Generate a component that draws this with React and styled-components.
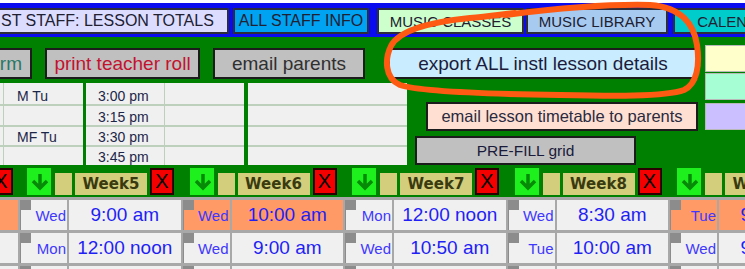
import React from 'react';
import styled, { createGlobalStyle } from 'styled-components';

const GlobalStyle = createGlobalStyle`
  *, *::before, *::after { box-sizing: border-box; }
  body {
    margin: 0;
    background: #008000;
    font-family: 'Liberation Sans', Arial, sans-serif;
  }
`;

// top sheet tabs
const tabs = [
  { label: 'ST STAFF: LESSON TOTALS', w: 231, ml: -2, bg: '#dcdcff', fs: 16, start: true },
  { label: 'ALL STAFF INFO', w: 136, ml: 4, bg: '#00a2f2', fs: 16 },
  { label: 'MUSIC CLASSES', w: 147, ml: 8, bg: '#ccffcc', fs: 15 },
  { label: 'MUSIC LIBRARY', w: 142, ml: 2, bg: '#a6caf0', fs: 15 },
  { label: 'CALENDAR', w: 130, ml: 5, bg: '#00cccc', fs: 15 },
];

const tableRows = [
  { days: 'M Tu', time: '3:00 pm' },
  { days: '', time: '3:15 pm' },
  { days: 'MF Tu', time: '3:30 pm' },
  { days: '', time: '3:45 pm' },
];

const weeks = [
  { n: 5, r1: { day: 'Wed', time: '9:00 am' }, r2: { day: 'Mon', time: '12:00 noon' } },
  { n: 6, r1: { day: 'Wed', time: '10:00 am', hot: true }, r2: { day: 'Wed', time: '9:00 am' } },
  { n: 7, r1: { day: 'Mon', time: '12:00 noon' }, r2: { day: 'Wed', time: '10:50 am' } },
  { n: 8, r1: { day: 'Wed', time: '8:30 am' }, r2: { day: 'Tue', time: '10:00 am' } },
  { n: 9, r1: { day: 'Tue', time: '9:00 am', hot: true }, r2: { day: 'Wed', time: '9:00 am' } },
];

const DownArrow = () => (
  <svg width="24" height="27" viewBox="0 0 24 27">
    <path d="M13 6 V20 M6 13 L13 20 L20 13" stroke="#078a07" strokeWidth="3.5" fill="none" />
  </svg>
);

const App = () => {
  return (
    <Page>
      <GlobalStyle />
      <TabBar>
        {tabs.map((t) => (
          <Tab key={t.label} $w={t.w} $ml={t.ml} $bg={t.bg} $fs={t.fs} $start={t.start}>
            {t.label}
          </Tab>
        ))}
      </TabBar>

      <Controls>
        <LeftCol>
          <ButtonRow>
            <Btn $w={34} $ml={-2} $color="#2b7866" $end>
              rm
            </Btn>
            <Btn $w={155} $ml={13} $color="#c4122f">
              print teacher roll
            </Btn>
            <Btn $w={152} $ml={13}>
              email parents
            </Btn>
            <Btn $w={310} $ml={23} $bg="#c9ecff" $color="#1c1c3c">
              export ALL instl lesson details
            </Btn>
          </ButtonRow>
          <BottomRow>
            <Table>
              <Group $w={83} $cols="3px 1fr">
                {tableRows.map((r, i) => (
                  <React.Fragment key={i}>
                    <Cell />
                    <Cell $pl={13}>{r.days}</Cell>
                  </React.Fragment>
                ))}
              </Group>
              <Group $w={158} $ml={3} $cols="78px 1fr">
                {tableRows.map((r, i) => (
                  <React.Fragment key={i}>
                    <Cell $pl={12}>{r.time}</Cell>
                    <Cell />
                  </React.Fragment>
                ))}
              </Group>
              <Group $w={159} $ml={4} $cols="1fr">
                {tableRows.map((r, i) => (
                  <Cell key={i} />
                ))}
              </Group>
            </Table>
            <SideButtons>
              <Btn $w={272} $h={29} $ml={19} $mt={19} $bg="#ffdfd2" $color="#2a2a40" $fs={16.5}>
                email lesson timetable to parents
              </Btn>
              <Btn $w={221} $h={29} $ml={8} $mt={5} $color="#1a1a3a" $fs={15.5}>
                PRE-FILL grid
              </Btn>
            </SideButtons>
          </BottomRow>
        </LeftCol>
        <RightCol>
          <ColorBox $bg="#ffffcc" />
          <ColorBox $bg="#a6ffd4" $mt={1} />
          <ColorBox $bg="#cbbfff" $mt={3} />
        </RightCol>
      </Controls>

      <WeekBar>
        <XBox $ml={-11}>X</XBox>
        {weeks.map((w, i) => (
          <WeekGroup key={w.n} $ml={i === 0 ? 14 : 15.5}>
            <ArrowBox>
              <DownArrow />
            </ArrowBox>
            <Khaki $w={17} $ml={4} />
            <Khaki $w={72} $ml={3}>
              Week{w.n}
            </Khaki>
            <XBox $ml={3}>X</XBox>
          </WeekGroup>
        ))}
      </WeekBar>

      <Sheet>
        {['r1', 'r2', 'r3'].map((key, ri) => (
          <DataRow key={key}>
            <TimeCell $w={18} $hot={ri === 0} />
            {weeks.map((w) => {
              const c = w[key] || {};
              return (
                <React.Fragment key={w.n}>
                  <DayCell $hot={c.hot}>{c.day}</DayCell>
                  <TimeCell $w={111.5} $hot={c.hot}>
                    {c.time}
                  </TimeCell>
                </React.Fragment>
              );
            })}
          </DataRow>
        ))}
      </Sheet>

      <Annotation width="745" height="269" viewBox="0 0 745 269">
        <path
          d="M505 15 C560 8, 610 4, 650 5 C682 7, 694 25, 697 45 C700 65, 697 84, 684 90 C665 97, 610 96, 560 95 C490 94, 420 92, 400 85 C384 78, 385 58, 391 46 C399 30, 430 22, 470 18 C490 16, 505 14, 515 13"
          stroke="#ff5a12"
          strokeWidth="6"
          fill="none"
          strokeLinecap="round"
        />
      </Annotation>
    </Page>
  );
};

const Page = styled.div`
  position: relative;
  width: 745px;
  height: 269px;
  overflow: hidden;
  background: #008000;
`;

const TabBar = styled.div`
  display: flex;
  height: 37px;
  border-top: 3px solid #fff;
  padding-top: 5px;
  background: #0b0bf0;
`;

const Tab = styled.div`
  flex: none;
  width: ${(p) => p.$w}px;
  margin-left: ${(p) => p.$ml}px;
  height: 26px;
  background: ${(p) => p.$bg};
  border: 2px solid #2c2c3c;
  display: flex;
  align-items: center;
  justify-content: ${(p) => (p.$start ? 'flex-start' : 'center')};
  padding-left: ${(p) => (p.$start ? 1 : 0)}px;
  font-size: ${(p) => p.$fs}px;
  color: #202030;
  white-space: nowrap;
  overflow: hidden;
`;

const Controls = styled.div`
  display: flex;
  height: 129px;
`;

const LeftCol = styled.div`
  width: 705px;
  flex: none;
  display: flex;
  flex-direction: column;
`;

const ButtonRow = styled.div`
  display: flex;
  padding-top: 11px;
`;

const Btn = styled.div`
  flex: none;
  width: ${(p) => p.$w}px;
  height: ${(p) => p.$h || 31}px;
  margin-left: ${(p) => p.$ml || 0}px;
  margin-top: ${(p) => p.$mt || 0}px;
  background: ${(p) => p.$bg || '#c0c0c0'};
  border: 2px solid #1c1c1c;
  color: ${(p) => p.$color || '#303030'};
  font-size: ${(p) => p.$fs || 19}px;
  display: flex;
  align-items: center;
  justify-content: ${(p) => (p.$end ? 'flex-end' : 'center')};
  padding-right: ${(p) => (p.$end ? 8 : 0)}px;
  white-space: nowrap;
  overflow: hidden;
`;

const BottomRow = styled.div`
  display: flex;
  margin-top: 4px;
  height: 83px;
`;

const Table = styled.div`
  display: flex;
  width: 407px;
  flex: none;
`;

const Group = styled.div`
  flex: none;
  width: ${(p) => p.$w}px;
  margin-left: ${(p) => p.$ml || 0}px;
  height: 82px;
  display: grid;
  grid-template-columns: ${(p) => p.$cols};
  grid-template-rows: 21px 19px 18px 18px;
  gap: 2px 1px;
  background: #bcd0bc;
`;

// text sits low in the cell; descenders get clipped like the sheet does
const Cell = styled.div`
  display: flex;
  align-items: flex-end;
  background: #f0f0f0;
  padding-left: ${(p) => p.$pl || 0}px;
  padding-bottom: 1px;
  font-size: 14px;
  line-height: 13px;
  color: #1c2648;
  white-space: nowrap;
  overflow: hidden;
`;

const SideButtons = styled.div`
  display: flex;
  flex-direction: column;
  align-items: flex-start;
`;

const RightCol = styled.div`
  flex: 1;
  padding-top: 8px;
  display: flex;
  flex-direction: column;
`;

const ColorBox = styled.div`
  height: 27px;
  margin-top: ${(p) => p.$mt || 0}px;
  background: ${(p) => p.$bg};
  border: 1px solid #b8b8b8;
  border-right: none;
`;

const WeekBar = styled.div`
  display: flex;
  align-items: flex-end;
  height: 31px;
  padding-bottom: 2px;
`;

const WeekGroup = styled.div`
  display: flex;
  align-items: flex-end;
  flex: none;
  margin-left: ${(p) => p.$ml}px;
`;

const XBox = styled.div`
  flex: none;
  width: 24px;
  height: 27px;
  margin-left: ${(p) => p.$ml || 0}px;
  background: #f40000;
  border: 2px solid #2a0000;
  color: #000;
  font-size: 20px;
  display: flex;
  align-items: center;
  justify-content: center;
`;

const ArrowBox = styled.div`
  flex: none;
  width: 24px;
  height: 27px;
  background: #1ef01e;
  display: flex;
`;

const Khaki = styled.div`
  flex: none;
  width: ${(p) => p.$w}px;
  height: 22px;
  margin-left: ${(p) => p.$ml}px;
  background: #d2ce7c;
  font-family: 'DejaVu Sans', Verdana, sans-serif;
  font-weight: bold;
  font-size: 15px;
  color: #3a3a10;
  display: flex;
  align-items: center;
  justify-content: center;
`;

const Sheet = styled.div`
  height: 72px;
  background: #a8a8a8;
  padding-top: 3px;
  display: flex;
  flex-direction: column;
  gap: 3px;
`;

const DataRow = styled.div`
  display: flex;
  gap: 2px;
  height: 30px;
  flex: none;
`;

const DayCell = styled.div`
  position: relative;
  flex: none;
  width: 47px;
  background: ${(p) => (p.$hot ? '#ff9a66' : '#f0f0f0')};
  border-left: 1px solid #8c8c8c;
  font-size: 15px;
  color: #4038ff;
  display: flex;
  align-items: center;
  justify-content: flex-end;
  padding-right: 1px;
  &::before {
    content: '';
    position: absolute;
    left: 0;
    top: 0;
    width: 10px;
    height: 10px;
    background: #8c8c8c;
  }
`;

const TimeCell = styled.div`
  flex: none;
  width: ${(p) => p.$w}px;
  background: ${(p) => (p.$hot ? '#ff9a66' : '#f0f0f0')};
  font-size: 19px;
  color: #1f1ff6;
  display: flex;
  align-items: center;
  justify-content: center;
  white-space: nowrap;
`;

const Annotation = styled.svg`
  position: absolute;
  left: 0;
  top: 0;
  pointer-events: none;
`;

export default App;
